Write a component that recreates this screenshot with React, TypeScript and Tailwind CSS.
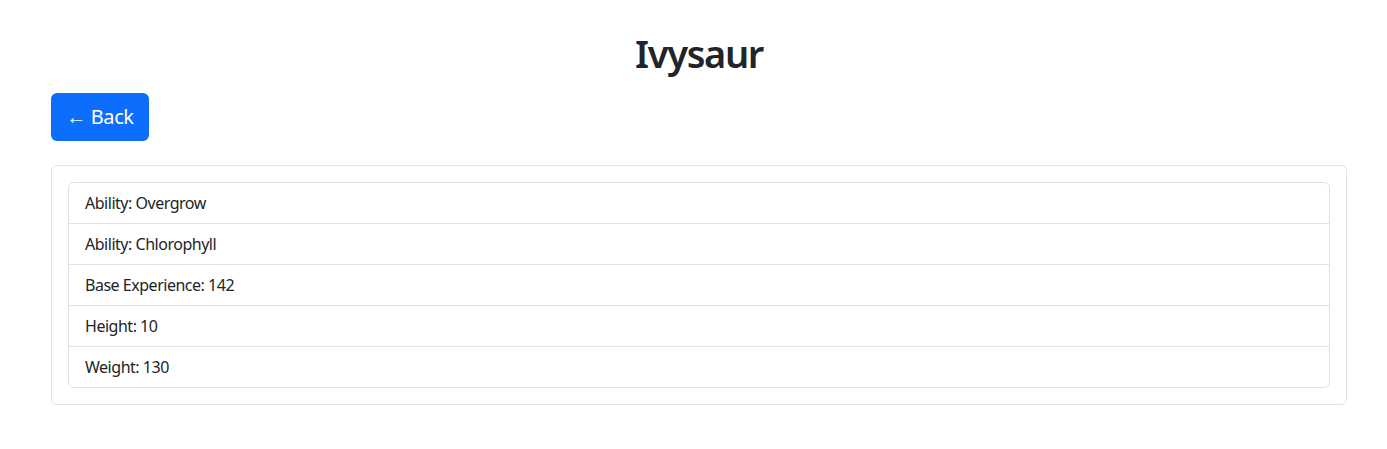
const stats = [
  'Ability: Overgrow',
  'Ability: Chlorophyll',
  'Base Experience: 142',
  'Height: 10',
  'Weight: 130',
]

export default function App() {
  return (
    <div
      className="min-h-screen bg-white text-[#212529]"
      style={{ fontFamily: '"Noto Sans", "Open Sans", sans-serif' }}
    >
      <div className="ml-[51px] w-[1296px] pt-[29px]">
        <h1 className="mb-[16px] text-center text-[38px] font-semibold leading-[48px] tracking-[-0.035em]">
          Ivysaur
        </h1>

        <button className="h-[48px] w-[98px] rounded-[6px] bg-[#0d6efd] text-[20px] leading-[30px] tracking-[-0.02em] text-white">
          ← Back
        </button>

        <div className="mt-6 rounded-[6px] border border-[#dee2e6] p-4">
          <ul className="rounded-[6px] border border-[#dee2e6]">
            {stats.map((stat, i) => (
              <li
                key={stat}
                className={
                  'px-4 py-2 text-base leading-6 tracking-[-0.03em]' +
                  (i > 0 ? ' border-t border-[#dee2e6]' : '')
                }
              >
                {stat}
              </li>
            ))}
          </ul>
        </div>
      </div>
    </div>
  )
}
